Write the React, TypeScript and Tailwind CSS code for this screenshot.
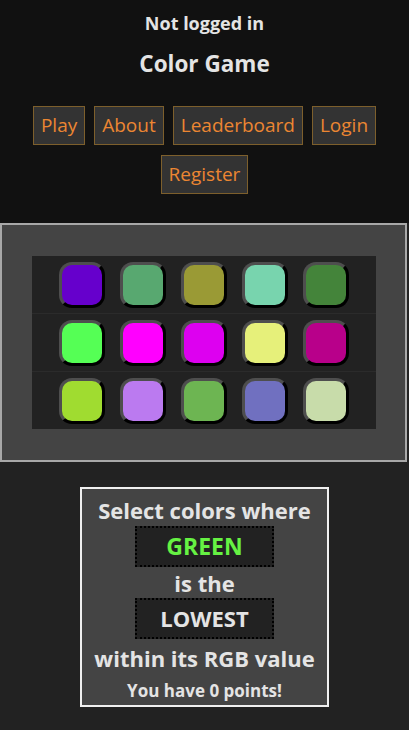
import React from "react";

const rows: string[][] = [
  ["#6600cc", "#58a870", "#9a9a35", "#78d4ae", "#44843a"],
  ["#55ff55", "#ff00ff", "#dd00f0", "#e6f07a", "#b8008a"],
  ["#a0dc30", "#bb7af0", "#6db552", "#7070c0", "#c8dcaa"],
];

const navBtn =
  "h-[39px] px-[7px] bg-[#333333] border border-[#7d5f2c] text-[#ec8632] text-[19px] leading-none flex items-center";

export default function App() {
  return (
    <div
      className="w-[409px] min-h-[730px] bg-[#222222] text-[#e4e4e4]"
      style={{ fontFamily: '"Open Sans", "Noto Sans", sans-serif' }}
    >
      <header className="bg-[#111111] h-[223px] flex flex-col items-center">
        <div className="mt-[12px] h-[22px] flex items-center text-[18px] font-bold">Not logged in</div>
        <div className="mt-[17px] h-[26px] flex items-center text-[22.5px] font-bold">Color Game</div>
        <nav className="mt-[29px] flex flex-wrap justify-center gap-x-[9px] gap-y-[10px] w-[370px]">
          <button className={navBtn}>Play</button>
          <button className={navBtn}>About</button>
          <button className={navBtn}>Leaderboard</button>
          <button className={navBtn}>Login</button>
          <button className={navBtn}>Register</button>
        </nav>
      </header>

      <section className="w-[407px] h-[239px] border-2 border-[#a8a8a8] bg-[#444444] flex items-center justify-center">
        <div className="w-[344px] h-[173px] bg-[#222222] flex flex-col">
          {rows.map((row, i) => (
            <div
              key={i}
              className={`flex-1 flex items-center justify-center gap-[15px] ${i < 2 ? "border-b border-[#2b2b2b]" : ""}`}
            >
              {row.map((c, j) => (
                <div
                  key={j}
                  className="w-[46px] h-[46px] rounded-[13px] border-[3px] border-t-[#4e4e4e] border-l-[#4e4e4e] border-b-black border-r-black"
                  style={{ backgroundColor: c }}
                />
              ))}
            </div>
          ))}
        </div>
      </section>

      <main className="pt-[25px] pb-[23px] flex justify-center">
        <div className="w-[249px] border-2 border-[#f0f0f0] bg-[#444444] flex flex-col items-center font-bold">
          <div className="h-[37px] pt-[6px] leading-[31px] text-[22px] whitespace-nowrap">Select colors where</div>
          <div className="w-[139px] h-[41px] border-2 border-dotted border-black bg-[#222222] flex items-center justify-center text-[23px] text-[#66f243]">
            GREEN
          </div>
          <div className="h-[31px] pt-[2px] leading-[29px] text-[22px]">is the</div>
          <div className="w-[139px] h-[41px] border-2 border-dotted border-black bg-[#222222] flex items-center justify-center text-[22px]">
            LOWEST
          </div>
          <div className="h-[38px] flex items-center text-[22px] whitespace-nowrap">within its RGB value</div>
          <div className="h-[28px] flex items-center text-[17px] whitespace-nowrap">You have 0 points!</div>
        </div>
      </main>
    </div>
  );
}
